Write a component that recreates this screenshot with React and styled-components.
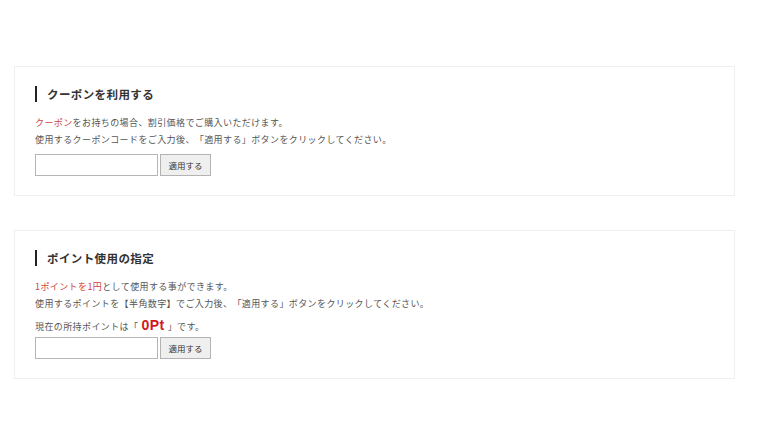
import React from 'react';
import styled, { createGlobalStyle } from 'styled-components';

const GlobalStyle = createGlobalStyle`
  body {
    margin: 0;
    background: #ffffff;
    font-family: "Noto Sans CJK JP", "Noto Sans", sans-serif;
    color: #555;
    text-spacing-trim: space-all;
    font-feature-settings: "chws" 0;
  }
`;

const Page = styled.div`
  width: 721px;
  padding: 66px 0 0 14px;
  display: flex;
  flex-direction: column;
  gap: 34px;
`;

const Card = styled.section`
  border: 1px solid #efefef;
  padding: 19px 20px 19px 20px;
  display: flex;
  flex-direction: column;
`;

const Heading = styled.h3`
  margin: 0 0 12px 0;
  border-left: 2px solid #222;
  padding-left: 10px;
  font-size: 11.5px;
  letter-spacing: 0.4px;
  line-height: 16px;
  font-weight: bold;
  color: #333;
`;

const Text = styled.p`
  margin: ${(p) => p.top || 0}px 0 0 0;
  font-size: 9px;
  letter-spacing: 0.4px;
  line-height: 17px;
  color: #555;
`;

const Red = styled.span`
  color: #d0433f;
`;

const Points = styled.span`
  color: #d0181c;
  font-weight: bold;
  font-size: 14px;
  font-family: "Liberation Sans", Arial, sans-serif;
  letter-spacing: 0.5px;
  margin: 0 3px;
`;

const Form = styled.div`
  display: flex;
  gap: 2px;
  margin-top: ${(p) => p.top}px;
`;

const Input = styled.input`
  box-sizing: border-box;
  width: 123px;
  height: 22px;
  border: 1px solid #b5b5b5;
  padding: 0 4px;
  margin: 0;
`;

const Button = styled.button`
  box-sizing: border-box;
  width: 51px;
  height: 22px;
  border: 1px solid #b3b3b3;
  background: #efefef;
  color: #333;
  font-family: "Noto Sans CJK JP", sans-serif;
  font-size: 8.5px;
  padding: 0;
  margin: 0;
  cursor: pointer;
`;

export default function App() {
  return (
    <>
      <GlobalStyle />
      <Page>
        <Card>
          <Heading>クーポンを利用する</Heading>
          <Text>
            <Red>クーポン</Red>をお持ちの場合、割引価格でご購入いただけます。
          </Text>
          <Text>使用するクーポンコードをご入力後、「適用する」ボタンをクリックしてください。</Text>
          <Form top={6}>
            <Input type="text" />
            <Button>適用する</Button>
          </Form>
        </Card>
        <Card>
          <Heading>ポイント使用の指定</Heading>
          <Text>
            <Red>1ポイントを1円</Red>として使用する事ができます。
          </Text>
          <Text>使用するポイントを【半角数字】でご入力後、「適用する」ボタンをクリックしてください。</Text>
          <Text top={5}>
            現在の所持ポイントは「<Points>0Pt</Points>」です。
          </Text>
          <Form top={2}>
            <Input type="text" />
            <Button>適用する</Button>
          </Form>
        </Card>
      </Page>
    </>
  );
}
